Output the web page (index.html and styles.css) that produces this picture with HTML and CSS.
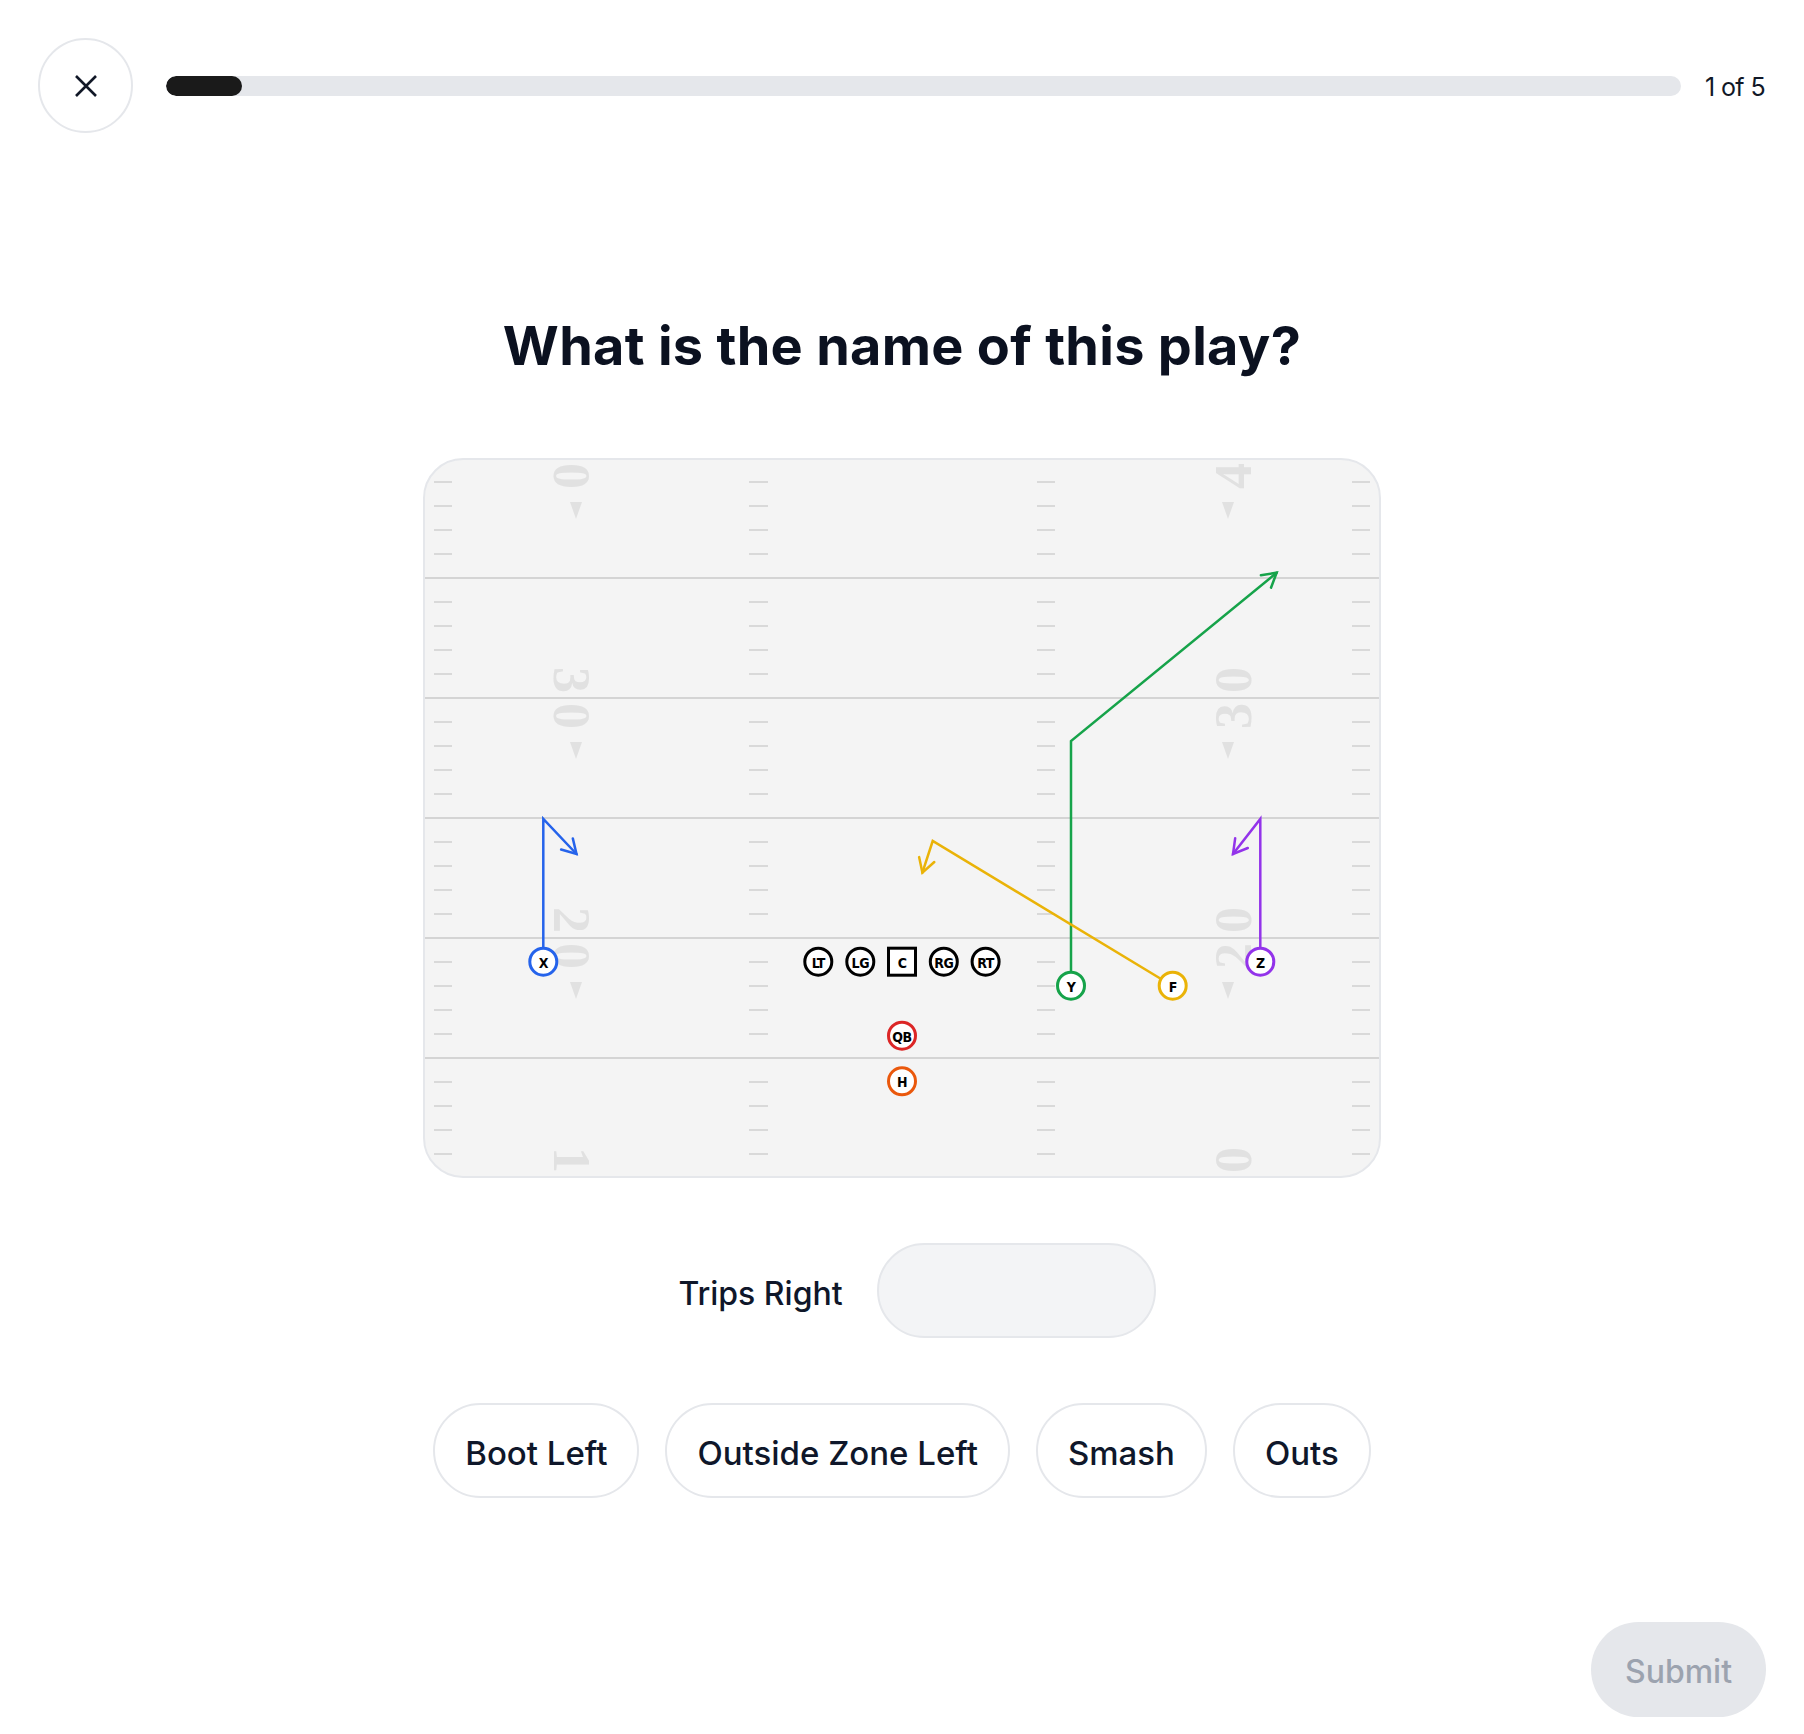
FILE: index.html
```html
<!DOCTYPE html>
<html lang="en">
<head>
  <meta charset="UTF-8" />
  <meta name="viewport" content="width=device-width, initial-scale=1" />
  <title>Play Quiz</title>
  <link rel="stylesheet" href="styles.css">
</head>
<body>
  <div class="quiz-page">
    <header class="quiz-header">
      <button class="close-btn" aria-label="Close">
        <svg width="24" height="24" viewBox="0 0 24 24">
          <path d="M2 2L22 22M22 2L2 22" />
        </svg>
      </button>
      <div class="progress">
        <div class="progress-fill" style="width: 76px"></div>
      </div>
      <span class="progress-count">1 of 5</span>
    </header>

    <h1 class="question">What is the name of this play?</h1>

    <div class="field">
      <svg class="field-svg" width="954" height="716" viewBox="2 2 954 716">
        <defs>
          <pattern id="hashes" x="0" y="12" width="958" height="24" patternUnits="userSpaceOnUse">
            <g class="hash">
              <rect x="11" y="11" width="18" height="2" />
              <rect x="326" y="11" width="19" height="2" />
              <rect x="614" y="11" width="18" height="2" />
              <rect x="929" y="11" width="18" height="2" />
            </g>
          </pattern>
        </defs>
        <rect width="958" height="720" fill="url(#hashes)" />

        <!-- yard lines -->
        <g class="yard-line">
          <rect x="0" y="119" width="958" height="2" />
          <rect x="0" y="239" width="958" height="2" />
          <rect x="0" y="359" width="958" height="2" />
          <rect x="0" y="479" width="958" height="2" />
          <rect x="0" y="599" width="958" height="2" />
        </g>

        <!-- yard numbers (the 40 and 10 run off the edges) -->
        <g class="yard-num">
          <text transform="translate(148 18) rotate(90)">0</text>
          <text transform="translate(148 222) rotate(90)">3</text>
          <text transform="translate(148 258) rotate(90)">0</text>
          <text transform="translate(148 462) rotate(90)">2</text>
          <text transform="translate(148 498) rotate(90)">0</text>
          <text transform="translate(148 702) rotate(90)">1</text>

          <text transform="translate(810 18) rotate(-90)">4</text>
          <text transform="translate(810 258) rotate(-90)">3</text>
          <text transform="translate(810 222) rotate(-90)">0</text>
          <text transform="translate(810 498) rotate(-90)">2</text>
          <text transform="translate(810 462) rotate(-90)">0</text>
          <text transform="translate(810 702) rotate(-90)">0</text>
        </g>
        <g class="yard-arrow">
          <polygon points="147,44 159,44 153,61" />
          <polygon points="147,284 159,284 153,301" />
          <polygon points="147,524 159,524 153,541" />
          <polygon points="799,44 811,44 805,61" />
          <polygon points="799,284 811,284 805,301" />
          <polygon points="799,524 811,524 805,541" />
        </g>

        <!-- routes -->
        <g class="route route-x">
          <polyline points="120.3,504 120.3,361 153.5,396" />
          <polyline points="149.8,380.4 153.5,396 138.1,391.5" />
        </g>
        <g class="route route-z">
          <polyline points="837.3,504 837.3,361 810,396" />
          <polyline points="824.8,390 810,396 812.2,380.2" />
        </g>
        <g class="route route-y">
          <polyline points="648,528 648,283 853.7,114.7" />
          <polyline points="837.9,117.3 853.7,114.7 848,129.7" />
        </g>
        <g class="route route-f">
          <polyline points="749.7,528 509.7,383 499.4,414.7" />
          <polyline points="511.3,404 499.4,414.7 496.1,399.1" />
        </g>

        <!-- offensive line -->
        <g class="player player-ol">
          <circle cx="395.3" cy="503.7" r="13.5" />
          <text x="395.3" y="504.5">LT</text>
          <circle cx="437.3" cy="503.7" r="13.5" />
          <text x="437.3" y="504.5">LG</text>
          <rect x="465.5" y="490.2" width="27" height="27" />
          <text x="479" y="504.5">C</text>
          <circle cx="520.8" cy="503.7" r="13.5" />
          <text x="520.8" y="504.5">RG</text>
          <circle cx="562.6" cy="503.7" r="13.5" />
          <text x="562.6" y="504.5">RT</text>
        </g>

        <!-- skill players -->
        <g class="player player-qb">
          <circle cx="479" cy="577.7" r="13.5" />
          <text x="479" y="578.5">QB</text>
        </g>
        <g class="player player-h">
          <circle cx="479" cy="623.3" r="13.5" />
          <text x="479" y="624.1">H</text>
        </g>
        <g class="player player-x">
          <circle cx="120.3" cy="503.7" r="13.5" />
          <text x="120.3" y="504.5">X</text>
        </g>
        <g class="player player-y">
          <circle cx="648" cy="527.7" r="13.5" />
          <text x="648" y="528.5">Y</text>
        </g>
        <g class="player player-f">
          <circle cx="749.7" cy="527.7" r="13.5" />
          <text x="749.7" y="528.5">F</text>
        </g>
        <g class="player player-z">
          <circle cx="837.3" cy="503.7" r="13.5" />
          <text x="837.3" y="504.5">Z</text>
        </g>
      </svg>
    </div>

    <div class="answer-row">
      <span class="answer-label">Trips Right</span>
      <div class="answer-slot"></div>
    </div>

    <div class="options">
      <button class="option">Boot Left</button>
      <button class="option">Outside Zone Left</button>
      <button class="option">Smash</button>
      <button class="option">Outs</button>
    </div>

    <footer class="quiz-footer">
      <button class="submit-btn" disabled>Submit</button>
    </footer>
  </div>
</body>
</html>
```

FILE: styles.css
```css
body {
  margin: 0;
  font-family: Inter, "Liberation Sans", sans-serif;
  background-color: #fff;
  color: #0f172a;
}

button {
  font-family: inherit;
}

.quiz-page {
  display: flex;
  flex-direction: column;
  align-items: center;
  min-height: 100vh;
  box-sizing: border-box;
}

/* header */

.quiz-header {
  align-self: stretch;
  display: flex;
  align-items: center;
  padding: 38px 39px 0 38px;
}

.close-btn {
  width: 95px;
  height: 95px;
  flex-shrink: 0;
  display: flex;
  align-items: center;
  justify-content: center;
  padding: 0;
  background: #fff;
  border: 2px solid #e5e7eb;
  border-radius: 50%;
  cursor: pointer;
}

.close-btn path {
  stroke: #111827;
  stroke-width: 2.6;
  fill: none;
}

.progress {
  flex: 1;
  height: 20px;
  margin-left: 33px;
  background-color: #e5e7eb;
  border-radius: 10px;
  overflow: hidden;
}

.progress-fill {
  height: 100%;
  background-color: #1a1a1a;
  border-radius: 10px;
}

.progress-count {
  margin-left: 24px;
  padding-top: 3px;
  font-size: 25px;
  letter-spacing: -0.6px;
  color: #111827;
}

/* question */

.question {
  margin: 180px 0 0;
  font-size: 54px;
  line-height: 65px;
  font-weight: 700;
  letter-spacing: 0.3px;
  color: #0b1120;
}

/* field */

.field {
  width: 958px;
  height: 720px;
  margin-top: 80px;
  box-sizing: border-box;
  border: 2px solid #e5e7eb;
  border-radius: 40px;
  background-color: #f4f4f4;
  overflow: hidden;
}

.field-svg {
  display: block;
}

.hash {
  fill: #d9d9d9;
}

.yard-line {
  fill: #d4d4d4;
}

.yard-num text {
  font-family: "Liberation Serif", serif;
  font-size: 52px;
  font-weight: 700;
  fill: #e1e1e1;
  text-anchor: middle;
  dominant-baseline: central;
}

.yard-arrow {
  fill: #e1e1e1;
}

.route polyline {
  fill: none;
  stroke-width: 2.5;
  stroke-linejoin: miter;
  stroke-linecap: round;
}

.route-x polyline { stroke: #2563eb; }
.route-z polyline { stroke: #9333ea; }
.route-y polyline { stroke: #16a34a; }
.route-f polyline { stroke: #eab308; }

.player circle,
.player rect {
  fill: #fff;
  stroke-width: 3;
}

.player text {
  font-family: "DejaVu Sans", sans-serif;
  font-stretch: condensed;
  font-size: 14px;
  font-weight: 700;
  letter-spacing: -0.5px;
  fill: #000;
  text-anchor: middle;
  dominant-baseline: central;
}

.player-ol circle,
.player-ol rect { stroke: #000; }
.player-qb circle { stroke: #dc2626; }
.player-h circle { stroke: #ea580c; }
.player-x circle { stroke: #2563eb; }
.player-y circle { stroke: #16a34a; }
.player-f circle { stroke: #eab308; }
.player-z circle { stroke: #9333ea; }

/* answer */

.answer-row {
  display: flex;
  align-items: center;
  gap: 34px;
  margin-top: 65px;
  padding-left: 30px;
}

.answer-label {
  padding-top: 5px;
  font-size: 32px;
  font-weight: 500;
}

.answer-slot {
  width: 279px;
  height: 95px;
  box-sizing: border-box;
  background-color: #f3f4f6;
  border: 2px solid #e5e7eb;
  border-radius: 48px;
}

.options {
  display: flex;
  gap: 26px;
  margin-top: 65px;
}

.option {
  height: 95px;
  padding: 5px 30px 0;
  background: #fff;
  border: 2px solid #e5e7eb;
  border-radius: 48px;
  font-size: 33px;
  font-weight: 500;
  color: #0f172a;
  cursor: pointer;
}

.option:hover {
  background-color: #f9fafb;
}

/* footer */

.quiz-footer {
  align-self: stretch;
  display: flex;
  justify-content: flex-end;
  margin-top: auto;
  padding: 0 38px 17px;
}

.submit-btn {
  width: 175px;
  height: 95px;
  padding-top: 4px;
  background-color: #e5e7eb;
  border: none;
  border-radius: 48px;
  font-size: 32px;
  font-weight: 500;
  color: #9ca3af;
}
```
